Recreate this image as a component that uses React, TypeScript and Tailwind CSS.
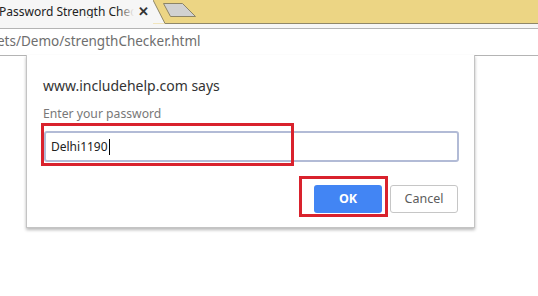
export default function App() {
  return (
    <div className="h-[296px] w-[538px] overflow-hidden bg-white font-['Noto_Sans',sans-serif]">
      {/* tab strip */}
      <div className="relative flex h-[24px] bg-[#ecd584]">
        <div className="relative flex h-[24px] w-[153px] items-center bg-[#f6f6f6]">
          <div className="relative w-[134px] overflow-hidden">
            <span className="ml-[-1px] block whitespace-nowrap text-[12px] leading-none text-[#222]">
              Password Strength Check
            </span>
            <div className="absolute right-0 top-0 h-full w-[16px] bg-gradient-to-r from-[#f6f6f6]/0 to-[#f6f6f6]" />
          </div>
          <span className="absolute right-[4px] top-[5px] text-[13px] font-bold leading-none text-[#333]">✕</span>
        </div>
        <svg width="385" height="24" viewBox="0 0 385 24" className="block">
          <polygon points="0,0 12,23.5 0,23.5" fill="#f6f6f6" />
          <line x1="0" y1="0" x2="12" y2="23.5" stroke="#8f8768" strokeWidth="1" />
          <line x1="12" y1="23.5" x2="385" y2="23.5" stroke="#8f8768" strokeWidth="1" />
          <polygon points="10.5,3.5 29.5,3.5 42.5,16.5 17.5,16.5" fill="#d1d1d1" stroke="#8c8466" strokeWidth="1" />
        </svg>
      </div>
      {/* toolbar */}
      <div className="h-[4px] bg-[#f6f6f6]" />
      <div className="flex h-[28px] items-center overflow-hidden border-y border-[#b4b4b4] bg-white">
        <span className="ml-[-3px] whitespace-nowrap text-[13.5px] leading-none text-[#6e6e6e]">
          ets/Demo/strengthChecker.html
        </span>
      </div>
      {/* prompt dialog */}
      <div className="relative ml-[26px] mt-[-1px] h-[173px] w-[449px] border-x border-b border-[#c4c4c4] bg-white px-[16px] pt-[21px] shadow-[0_2px_3px_rgba(0,0,0,0.28)]">
        <div className="text-[14px] leading-[20px] text-[#333]">www.includehelp.com says</div>
        <div className="mt-[9px] text-[12.2px] leading-[18px] text-[#787878]">Enter your password</div>
        <div className="ml-[1px] mt-[8px] flex h-[31px] w-[415px] items-center rounded-[3px] border-2 border-[#b2bbd6] pl-[5px] text-[12px] text-[#222]">
          Delhi1190<span className="ml-[1px] h-[16px] w-px bg-black" />
        </div>
        <div className="mt-[23px] flex justify-end gap-[8px]">
          <button className="h-[28px] w-[68px] rounded-[3px] bg-[#4285f4] text-[12.5px] font-bold text-white">OK</button>
          <button className="h-[28px] w-[68px] rounded-[3px] border border-[#c6c6c6] bg-white text-[12.5px] text-[#5c5c5c]">Cancel</button>
        </div>
        {/* annotation boxes */}
        <div className="absolute left-[14px] top-[68px] h-[43px] w-[253px] border-[3px] border-[#d9222d]" />
        <div className="absolute left-[272px] top-[121px] h-[41px] w-[89px] border-[3px] border-[#d9222d]" />
      </div>
    </div>
  )
}
